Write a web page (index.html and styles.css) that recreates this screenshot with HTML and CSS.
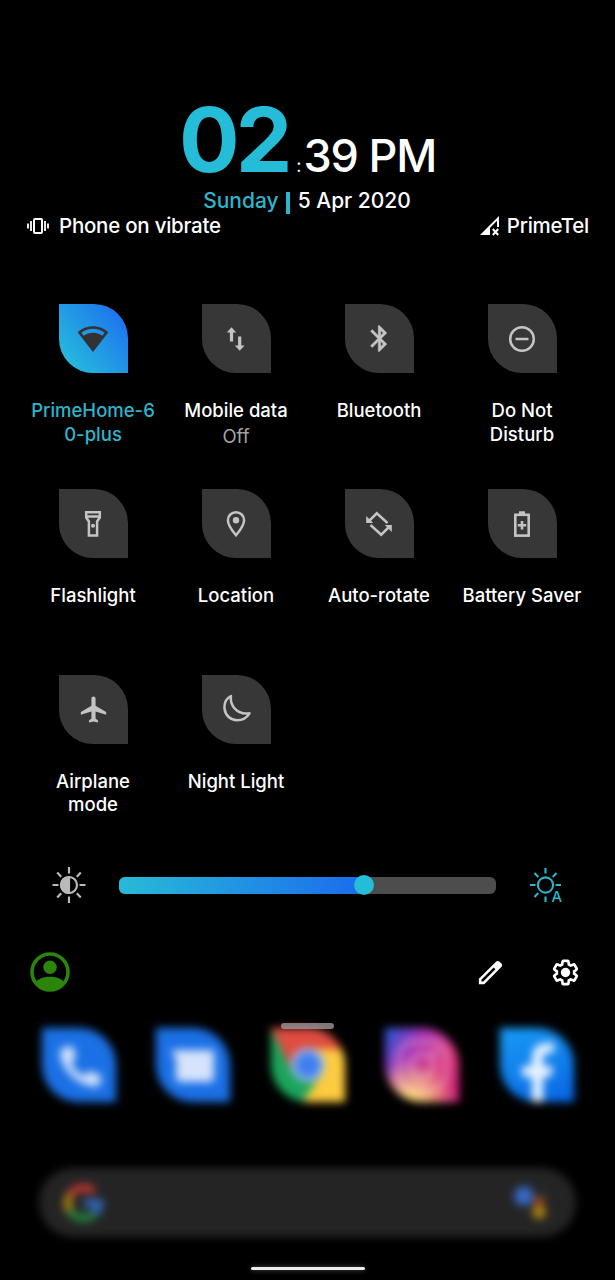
FILE: index.html
```html
<!DOCTYPE html>
<html lang="en">
<head>
    <meta charset="UTF-8">
    <meta name="viewport" content="width=device-width, initial-scale=1.0">
    <title>Quick Settings</title>
    <link rel="stylesheet" href="styles.css">
</head>
<body>
    <div class="screen">
        <header class="clock">
            <div class="time">
                <span class="hour">02</span><span class="colon">:</span><span class="minute">39 PM</span>
            </div>
            <div class="date">
                <span class="day">Sunday</span>
                <span class="divider"></span>
                <span class="full-date">5 Apr 2020</span>
            </div>
        </header>

        <div class="status">
            <div class="ringer">
                <svg width="22" height="16" viewBox="0 0 22 16" fill="none" stroke="#fff" stroke-width="1.8">
                    <rect x="7" y="1" width="8" height="14" rx="1" stroke-width="2"/>
                    <path d="M4 3v10M1 5.5v5M18 3v10M21 5.5v5"/>
                </svg>
                <span>Phone on vibrate</span>
            </div>
            <div class="carrier">
                <svg width="21" height="20" viewBox="0 0 21 20">
                    <path d="M0 19L19 0v11h-2V4.800l-7 7V19z" fill="#fff"/>
                    <path d="M12.800 13l5.400 6M18.200 13l-5.400 6" stroke="#fff" stroke-width="2"/>
                </svg>
                <span>PrimeTel</span>
            </div>
        </div>

        <main class="tiles">
            <div class="tile active">
                <div class="leaf">
                    <svg width="32" height="32" viewBox="0 0 24 24" fill="#303236">
                        <path fill-rule="evenodd" d="M12 2.500C7.600 2.500 3.500 4.200.5 7L12 21.800 23.500 7C20.500 4.200 16.400 2.500 12 2.500zM3.300 7.300C5.800 5.400 8.800 4.400 12 4.400s6.200 1 8.700 2.900l-1.700 2.300C17 8.100 14.600 7.300 12 7.300S7 8.100 5 9.600z"/>
                    </svg>
                </div>
                <p class="label">PrimeHome-6<br>0-plus</p>
            </div>
            <div class="tile">
                <div class="leaf">
                    <svg width="28" height="28" viewBox="0 0 28 28" fill="#c4c4c4">
                        <path d="M9.500 2.200L4.800 7.400h3.100v9.200h3.200V7.400h3.100zM17.700 25.800l4.900-5.200h-3.300v-9.200h-3.200v9.200h-3.300z"/>
                    </svg>
                </div>
                <p class="label">Mobile data</p>
                <p class="state">Off</p>
            </div>
            <div class="tile">
                <div class="leaf">
                    <svg width="31" height="31" viewBox="0 0 24 24" fill="#c4c4c4" stroke="#c4c4c4" stroke-width=".3">
                        <path d="M17.710 7.710L12 2h-1v7.590L6.410 5 5 6.410 10.590 12 5 17.590 6.410 19 11 14.410V22h1l5.710-5.710-4.300-4.290 4.300-4.290zM13 5.830l1.880 1.880L13 9.590V5.830zm1.880 10.460L13 18.170v-3.760l1.880 1.880z"/>
                    </svg>
                </div>
                <p class="label">Bluetooth</p>
            </div>
            <div class="tile">
                <div class="leaf">
                    <svg width="28" height="28" viewBox="0 0 28 28" fill="none" stroke="#c4c4c4" stroke-width="2.500">
                        <circle cx="14" cy="14" r="11.800"/>
                        <path d="M7.500 14h13"/>
                    </svg>
                </div>
                <p class="label">Do Not<br>Disturb</p>
            </div>

            <div class="tile">
                <div class="leaf">
                    <svg width="28" height="28" viewBox="0 0 28 28" fill="none" stroke="#c4c4c4" stroke-width="2.500">
                        <path d="M7.200 2.200h13.600v5.300l-2.700 4V25.500H9.900V11.500l-2.700-4zM7.200 6.400h13.600"/>
                        <circle cx="14" cy="15.800" r="2" fill="#c4c4c4" stroke="none"/>
                    </svg>
                </div>
                <p class="label">Flashlight</p>
            </div>
            <div class="tile">
                <div class="leaf">
                    <svg width="28" height="28" viewBox="0 0 28 28" fill="none" stroke="#c4c4c4" stroke-width="2.500">
                        <path d="M14 2.200c-4.500 0-8.100 3.500-8.100 8 0 5.500 8.100 15 8.100 15s8.100-9.500 8.100-15c0-4.500-3.600-8-8.100-8z"/>
                        <circle cx="14" cy="10.200" r="3.200" fill="#c4c4c4" stroke="none"/>
                    </svg>
                </div>
                <p class="label">Location</p>
            </div>
            <div class="tile">
                <div class="leaf">
                    <svg width="28" height="28" viewBox="0 0 28 28" fill="none" stroke="#c4c4c4" stroke-width="2.500">
                        <path d="M22.500 13L11.800 3.300 3.500 11.500M5.500 15l10.700 9.700 8.300-8.200"/>
                        <path d="M1.200 6v7h7zM26.800 22v-7h-7z" fill="#c4c4c4" stroke="none"/>
                    </svg>
                </div>
                <p class="label">Auto-rotate</p>
            </div>
            <div class="tile">
                <div class="leaf">
                    <svg width="28" height="28" viewBox="0 0 28 28" fill="none" stroke="#c4c4c4" stroke-width="2.600">
                        <rect x="7.300" y="4.800" width="13.400" height="20.800"/>
                        <path d="M11 3h6" stroke-width="3.500"/>
                        <path d="M14 11v8.400M9.800 15.200h8.400"/>
                    </svg>
                </div>
                <p class="label">Battery Saver</p>
            </div>

            <div class="tile">
                <div class="leaf">
                    <svg width="31" height="31" viewBox="0 0 24 24" fill="#c4c4c4">
                        <path d="M21.800 16v-2l-8.200-5V3.500C13.600 2.670 12.900 2 12 2s-1.600.67-1.600 1.500V9l-8.200 5v2l8.200-2.500V19L8.500 20.500V22l3.500-.8 3.500.8v-1.500L13.600 19v-5.500l8.200 2.500z"/>
                    </svg>
                </div>
                <p class="label">Airplane<br>mode</p>
            </div>
            <div class="tile">
                <div class="leaf">
                    <svg width="30" height="30" viewBox="0 0 30 30" fill="none" stroke="#c4c4c4" stroke-width="2.500" stroke-linejoin="round">
                        <path d="M10 2C5 4.500 3 9.500 3.600 15c.8 6.500 6 11.200 12.400 11.200 5.200 0 9.800-2.400 12.500-6.900-6 .9-11.200-.8-14.700-4.600C10.500 11 9.300 7 10 2z"/>
                    </svg>
                </div>
                <p class="label">Night Light</p>
            </div>
        </main>

        <div class="brightness">
            <svg width="36" height="36" viewBox="0 0 36 36" fill="none" stroke="#b9b9b9" stroke-width="2.200">
                <circle cx="18" cy="18" r="8"/>
                <path d="M18 10a8 8 0 0 0 0 16z" fill="#b9b9b9"/>
                <path d="M18 0v6.500M18 29.500V36M1.500 18h6M28.500 18h6M6.200 5.500l4 4.200M25.800 26.300l4 4.200M6.200 30.500l4-4.200M25.800 9.700l4-4.200"/>
            </svg>
            <div class="track">
                <div class="fill" style="width: 65%"></div>
                <div class="thumb"></div>
            </div>
            <svg class="auto-brightness" width="36" height="36" viewBox="0 0 36 36" fill="none" stroke="#2cb5cc" stroke-width="2.100">
                <circle cx="17.500" cy="18" r="7.600"/>
                <path d="M17.500 1v5.500M17.500 29.500V35M2 18h5.500M27.500 18h5.500M6.500 6l3.800 4M6.500 30l3.800-4M24.700 10l3.800-4"/>
                <text class="auto" x="23.500" y="35">A</text>
            </svg>
        </div>

        <div class="footer">
            <svg width="40" height="40" viewBox="0 0 40 40">
                <circle cx="20" cy="20" r="18" fill="none" stroke="#2b850b" stroke-width="3.600"/>
                <circle cx="20" cy="15.300" r="6.700" fill="#2b850b"/>
                <path d="M5.500 30.500C8.500 26.500 14 24.800 20 24.800s11.500 1.700 14.500 5.700C31 36 26 39 20 39S9 36 5.500 30.500z" fill="#2b850b"/>
            </svg>
            <div class="actions">
                <svg width="31" height="31" viewBox="0 0 24 24" fill="#fff">
                    <path d="M20.410 4.940l-1.350-1.350c-.78-.78-2.050-.78-2.830 0L3 16.820V21h4.180L20.410 7.770c.79-.78.79-2.050 0-2.830zm-14 14.120L5 19l-.06-1.410 9.480-9.480 1.410 1.410z"/>
                </svg>
                <svg width="31" height="31" viewBox="0 0 24 24">
                    <path d="M19.430 12.980c.04-.32.07-.64.07-.98s-.03-.66-.07-.98l2.110-1.650a.5.500 0 0 0 .12-.64l-2-3.460a.5.500 0 0 0-.61-.22l-2.490 1a7.300 7.300 0 0 0-1.690-.98l-.38-2.650A.49.490 0 0 0 14 2h-4a.49.490 0 0 0-.49.420l-.38 2.650c-.61.25-1.170.59-1.690.98l-2.490-1a.5.500 0 0 0-.61.220l-2 3.460a.5.500 0 0 0 .12.640l2.110 1.650a7.900 7.900 0 0 0 0 1.960l-2.110 1.650a.5.500 0 0 0-.12.640l2 3.460c.12.220.39.300.61.220l2.490-1c.52.400 1.080.73 1.690.98l.38 2.650c.03.240.24.420.49.420h4c.25 0 .46-.18.49-.42l.38-2.650c.61-.25 1.170-.59 1.690-.98l2.490 1c.23.090.49 0 .61-.22l2-3.460a.5.500 0 0 0-.12-.64z" fill="none" stroke="#fff" stroke-width="2.300" transform="translate(1.200 1.200) scale(.9)"/>
                    <circle cx="12" cy="12" r="3.600" fill="#fff"/>
                </svg>
            </div>
        </div>

        <div class="home">
            <div class="handle"></div>
            <div class="dock">
                <div class="app phone">
                    <svg width="74" height="74" viewBox="0 0 74 74">
                        <path d="M24 19l7-1 3 12-5 5c3 6 7 10 13 13l5-5 12 4-1 9c-1 3-5 3-9 2C34 55 21 43 18 26c0-4 2-7 6-7z" fill="#d5e4fb"/>
                    </svg>
                </div>
                <div class="app messages">
                    <svg width="74" height="74" viewBox="0 0 74 74">
                        <path d="M15 22h43v28q0 4-4 4H24q-4 0-4-4V31z" fill="#d6e3fb"/>
                    </svg>
                </div>
                <div class="app">
                    <svg width="74" height="74" viewBox="0 0 74 74">
                        <path d="M0 0h74v74H0z" fill="#1ca45c"/>
                        <path d="M0 0h74v25H37L22 45z" fill="#df4c40"/>
                        <path d="M37 21h37v53H31l21-29z" fill="#fdcb3e"/>
                        <circle cx="37" cy="37" r="17" fill="#a9c5ef"/>
                        <circle cx="37" cy="37" r="13" fill="#407ef0"/>
                    </svg>
                </div>
                <div class="app instagram">
                    <svg width="74" height="74" viewBox="0 0 74 74" fill="none" stroke="#f6cbdd" stroke-opacity=".5" stroke-width="4">
                        <rect x="14" y="14" width="47" height="47" rx="14"/>
                        <circle cx="37" cy="38" r="12"/>
                        <circle cx="50" cy="25" r="1.500"/>
                    </svg>
                </div>
                <div class="app facebook">
                    <svg width="74" height="74" viewBox="0 0 74 74">
                        <path d="M32 74V49H22V38h10v-8c0-10 6-15 15-15h7v10h-5c-6 0-6 3-6 7v6h10l-2 11h-8v25z" fill="#e9f4ff"/>
                    </svg>
                </div>
            </div>
            <div class="search">
                <svg width="44" height="44" viewBox="0 0 44 44" fill="none" stroke-width="8">
                    <path d="M9 14a16 16 0 0 1 24-3" stroke="#b93832"/>
                    <path d="M9 30a16 16 0 0 1 0-16" stroke="#a88312"/>
                    <path d="M33 33a16 16 0 0 1-24-3" stroke="#24803c"/>
                    <path d="M23 22h15q0 7-5 11" stroke="#3467b9"/>
                </svg>
                <svg width="44" height="44" viewBox="0 0 44 44">
                    <circle cx="14" cy="15" r="10" fill="#3768c4"/>
                    <circle cx="29" cy="20" r="5" fill="#a84025"/>
                    <circle cx="29" cy="31" r="7" fill="#ac8412"/>
                    <circle cx="35" cy="15" r="2" fill="#24632f"/>
                </svg>
            </div>
            <div class="navbar"></div>
        </div>
    </div>
</body>
</html>
```

FILE: styles.css
```css
* {
    box-sizing: border-box;
}
body {
    margin: 0;
    background-color: #000;
    color: #fff;
    font-family: Inter, "Open Sans", sans-serif;
    font-weight: 500;
}
svg {
    display: block;
    flex-shrink: 0;
}
p {
    margin: 0;
}
.screen {
    width: 615px;
    height: 1280px;
    overflow: hidden;
    display: flex;
    flex-direction: column;
}

/* Clock */
.clock {
    height: 213px;
    padding-top: 96px;
    display: flex;
    flex-direction: column;
    align-items: center;
}
.time {
    height: 91px;
    line-height: 87px;
    display: flex;
    align-items: baseline;
    white-space: nowrap;
}
.hour {
    font-size: 90px;
    font-weight: 700;
    letter-spacing: -4px;
    color: #25bcd7;
}
.colon {
    font-size: 18px;
    font-weight: 400;
    margin: 0 2px 0 8px;
}
.minute {
    font-size: 45px;
    letter-spacing: -1.2px;
}
.date {
    display: flex;
    align-items: center;
    font-size: 21px;
    line-height: 25px;
    margin-right: 1px;
}
.day {
    color: #2cb5cc;
}
.divider {
    width: 4px;
    height: 22px;
    margin: 5px 8px 0 7px;
    background-color: #2cb5cc;
}

/* Status row */
.status {
    height: 25px;
    padding: 0 26px 0 27px;
    display: flex;
    justify-content: space-between;
    font-size: 20.5px;
    letter-spacing: -0.25px;
    line-height: 25px;
}
.ringer, .carrier {
    display: flex;
    align-items: center;
}
.ringer {
    gap: 10px;
}
.carrier {
    gap: 6px;
}

/* Quick settings tiles */
.tiles {
    height: 556px;
    margin: 66px 21px 0 21.5px;
    display: grid;
    grid-template-columns: repeat(4, 143px);
    grid-auto-rows: 185.4px;
}
.tile {
    display: flex;
    flex-direction: column;
    align-items: center;
    text-align: center;
    white-space: nowrap;
}
.leaf {
    width: 69px;
    height: 69px;
    margin-bottom: 26px;
    border-radius: 0 34px 0 34px;
    background-color: #373737;
    display: flex;
    align-items: center;
    justify-content: center;
}
.active .leaf {
    background: linear-gradient(50deg, #25b8dc 15%, #1e72ef 90%);
}
.label {
    font-size: 18.5px;
    line-height: 23.5px;
}
.active .label {
    color: #2cb5cc;
}
.state {
    font-size: 18.5px;
    font-weight: 400;
    line-height: 26px;
    color: #a5a5a5;
}

/* Brightness slider */
.brightness {
    height: 50px;
    padding: 0 51px 0 51px;
    display: flex;
    align-items: center;
    justify-content: space-between;
}
.track {
    position: relative;
    width: 377px;
    height: 17px;
    border-radius: 6px;
    background-color: #4d4d4d;
}
.fill {
    height: 17px;
    border-radius: 6px 0 0 6px;
    background: linear-gradient(90deg, #27bbd7, #1b6bed);
}
.thumb {
    position: absolute;
    left: 235px;
    top: -1.5px;
    width: 20px;
    height: 20px;
    border-radius: 50%;
    background-color: #25bcd7;
}
.auto-brightness {
    overflow: visible;
}
.auto {
    font-family: Inter, sans-serif;
    font-size: 15px;
    fill: #2cb5cc;
    stroke: none;
}

/* Footer */
.footer {
    height: 40px;
    margin-top: 42px;
    padding: 0 34px 0 30px;
    display: flex;
    align-items: center;
    justify-content: space-between;
}
.actions {
    display: flex;
    align-items: center;
    gap: 44px;
}

/* Launcher behind the shade */
.home {
    position: relative;
    margin-top: 31px;
    height: 257px;
    display: flex;
    flex-direction: column;
    align-items: center;
}
.handle {
    position: absolute;
    top: 0;
    left: 281px;
    width: 53px;
    height: 6px;
    border-radius: 3px;
    background-color: rgba(165, 160, 160, 0.75);
    z-index: 1;
}
.dock {
    width: 532px;
    margin-top: 5px;
    display: flex;
    justify-content: space-between;
    filter: blur(4px);
}
.app {
    width: 74px;
    height: 74px;
    overflow: hidden;
    border-radius: 0 37px 0 37px;
}
.phone, .messages {
    background-color: #1b70e5;
}
.instagram {
    background: radial-gradient(circle at 35% 105%, #ffdb7a 10%, transparent 50%), linear-gradient(125deg, #3951cf 8%, #a633b7 32%, #da397f 65%, #ce1f79);
}
.facebook {
    background: linear-gradient(160deg, #189bf4, #0865e4);
}
.search {
    width: 537px;
    height: 69px;
    margin-top: 66px;
    padding: 0 22px;
    border-radius: 35px;
    background-color: #242424;
    display: flex;
    align-items: center;
    justify-content: space-between;
    filter: blur(4px);
}
.navbar {
    width: 114px;
    height: 3px;
    margin-top: 30px;
    border-radius: 2px;
    background-color: #ededed;
    box-shadow: 0 0 5px rgba(255, 255, 255, 0.35);
}
```
